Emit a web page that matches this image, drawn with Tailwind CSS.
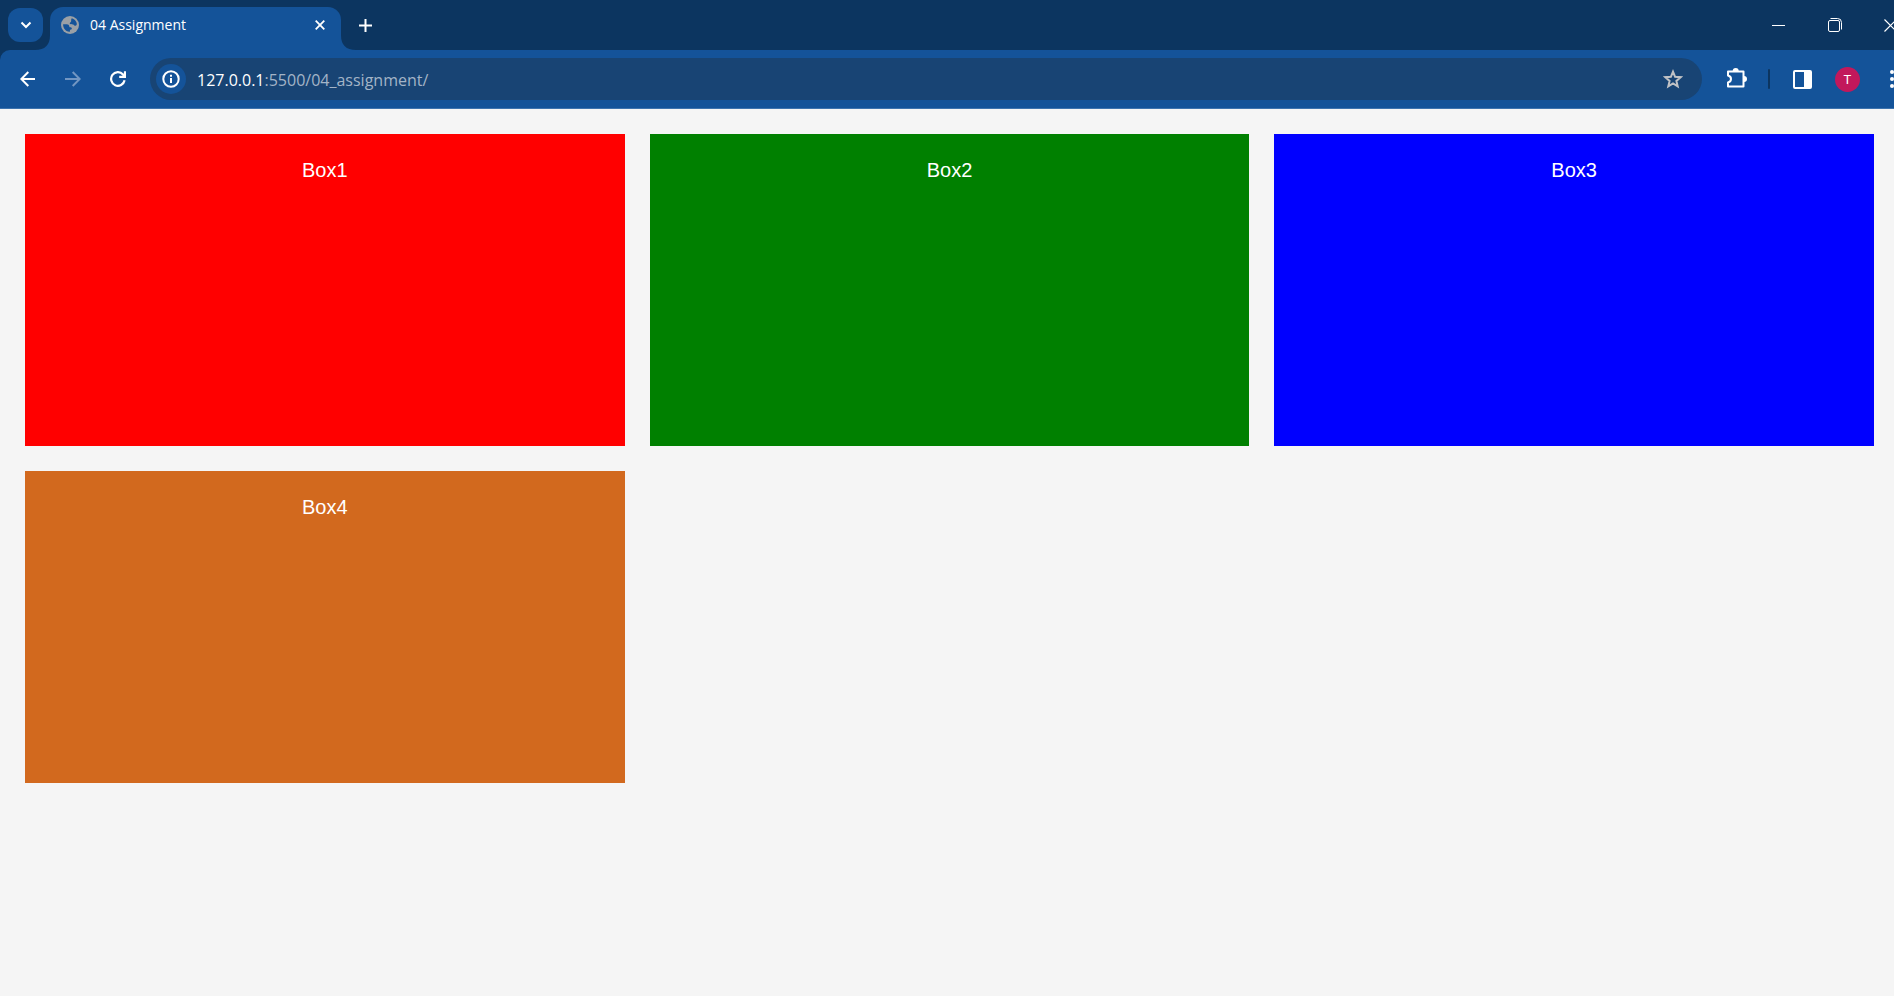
<!DOCTYPE html>
<html lang="en">
<head>
<meta charset="utf-8">
<title>04 Assignment</title>
<script src="https://cdn.jsdelivr.net/npm/@tailwindcss/browser@4"></script>
</head>
<body class="min-h-screen overflow-x-hidden bg-[#f5f5f5] font-['Segoe_UI','Open_Sans',sans-serif]">
<header class="overflow-hidden bg-[#0c3560] text-white">
  <div class="flex h-[50px] items-end">
    <button type="button" aria-label="Search tabs" class="mb-2 ml-2 flex h-[34px] w-[35px] shrink-0 items-center justify-center rounded-xl bg-[#145399]">
      <svg class="h-2 w-3" viewBox="0 0 12 8" fill="none" stroke="currentColor" stroke-width="2"><path d="M1.500 1.500L6 6l4.500-4.500"/></svg>
    </button>
    <svg class="-ml-2 h-[15px] w-[15px] shrink-0 text-[#145399]" viewBox="0 0 15 15" fill="currentColor"><path d="M15 0v15H0Q15 15 15 0Z"/></svg>
    <div role="tab" aria-selected="true" class="flex h-[43px] w-[291px] shrink-0 items-center rounded-t-[13px] bg-[#145399] pr-[11px] pb-[7px] pl-[11px]">
      <svg class="h-[18px] w-[18px] shrink-0" viewBox="0 0 18 18"><circle cx="9" cy="9" r="9" fill="#9aa0a6"/><path d="M10.800 2.200c2.400.6 4.300 2.500 4.900 4.900.4 2-.3 2.700-1.300 2.700-1.200 0-1.300-1-2.400-1.300-1.300-.3-3 .3-3.300-.9-.1-1 1.200-1.200 1.400-2.100.2-1.100-.2-2.400.7-3.300ZM2.100 8.300h3.700c1.500 0 2.300.8 2.500 2.100.1.700.6.900 1.300.9.900.1 1.300.7 1.200 1.400-.2.700-1 .7-1.500 1.100-.5.500-.3 1.400-.7 2.100C5 15.600 2 12.500 2.100 8.300Z" fill="#145399"/></svg>
      <span class="ml-[11px] flex-1 text-sm leading-5">04 Assignment</span>
      <button type="button" aria-label="Close tab" class="flex h-5 w-5 items-center justify-center">
        <svg class="h-[10px] w-[10px]" viewBox="0 0 10 10" stroke="currentColor" stroke-width="1.800"><path d="M.7.7l8.600 8.600M9.300.7L.7 9.300"/></svg>
      </button>
    </div>
    <svg class="h-[15px] w-[15px] shrink-0 text-[#145399]" viewBox="0 0 15 15" fill="currentColor"><path d="M0 0v15h15Q0 15 0 0Z"/></svg>
    <button type="button" aria-label="New tab" class="mb-[15px] flex h-5 w-[19px] shrink-0 items-center justify-center">
      <svg class="h-[13px] w-[13px]" viewBox="0 0 13 13" stroke="currentColor" stroke-width="2"><path d="M6.500 0v13M0 6.500h13"/></svg>
    </button>
    <div class="-mr-1 ml-auto flex h-[50px] shrink-0 items-center gap-[42px]">
      <button type="button" aria-label="Minimize" class="flex h-8 w-[14px] items-center">
        <svg class="h-[13px] w-[13px]" viewBox="0 0 13 13" stroke="currentColor"><path d="M0 6.500h13"/></svg>
      </button>
      <button type="button" aria-label="Restore" class="flex h-8 w-[14px] items-center">
        <svg class="h-[14px] w-[14px]" viewBox="0 0 14 14" fill="none" stroke="currentColor"><rect x=".5" y="2.500" width="11" height="11" rx="1.500"/><path d="M2.500.5h7q4 0 4 4v7"/></svg>
      </button>
      <button type="button" aria-label="Close window" class="flex h-8 w-[14px] items-center">
        <svg class="h-[13px] w-[13px]" viewBox="0 0 13 13" stroke="currentColor" stroke-width="1.200"><path d="M.5.5l12 12M12.500.5l-12 12"/></svg>
      </button>
    </div>
  </div>
  <div class="flex h-[59px] items-center rounded-tl-[10px] border-b border-[#3d73ae] bg-[#145399]">
    <nav class="ml-5 flex shrink-0 items-center gap-[29px]">
      <button type="button" aria-label="Back" class="h-4 w-4">
        <svg class="h-4 w-4" viewBox="0 0 16 16" fill="none" stroke="currentColor" stroke-width="2"><path d="M15 8H2M8.300 1L1.300 8l7 7"/></svg>
      </button>
      <button type="button" aria-label="Forward" class="h-4 w-4 text-[#7296c2]">
        <svg class="h-4 w-4" viewBox="0 0 16 16" fill="none" stroke="currentColor" stroke-width="2"><path d="M0 8H14M7.700 1l7 7-7 7"/></svg>
      </button>
      <button type="button" aria-label="Reload" class="h-4 w-4">
        <svg class="h-4 w-4" viewBox="0 0 16 16" fill="none" stroke="currentColor" stroke-width="2.200"><path d="M14.600 9.300A6.800 6.800 0 1 1 13 3.400l1.300 1.400M15 .3v5.600H9.200"/></svg>
      </button>
    </nav>
    <div class="ml-6 flex h-[42px] min-w-0 flex-1 items-center rounded-full bg-[#184474] pr-[19px] pl-[6px]">
      <button type="button" aria-label="View site information" class="flex h-[30px] w-[30px] shrink-0 items-center justify-center rounded-full bg-[#145399]">
        <svg class="h-[18px] w-[18px]" viewBox="0 0 18 18" fill="none" stroke="currentColor" stroke-width="2"><circle cx="9" cy="9" r="7.700"/><path d="M9 8v5M9 4.800v2"/></svg>
      </button>
      <div role="textbox" contenteditable="true" spellcheck="false" aria-label="Address" class="ml-[11px] min-w-0 flex-1 pt-[2px] text-base leading-6 whitespace-nowrap text-[#a3b4c7]"><span class="text-white">127.0.0.1</span>:5500/04_assignment/</div>
      <button type="button" aria-label="Bookmark this tab" class="h-5 w-5 shrink-0 text-[#c0c2c5]">
        <svg class="h-5 w-5" viewBox="0 0 20 20" fill="none" stroke="currentColor" stroke-width="2"><path d="M10 2.700l2.100 5.100 5.600.4-4.300 3.700 1.300 5.500-4.700-3-4.700 3 1.300-5.500-4.300-3.700 5.600-.4Z"/></svg>
      </button>
    </div>
    <div class="flex shrink-0 items-center">
      <button type="button" aria-label="Extensions" class="ml-6 h-[22px] w-[22px]">
        <svg class="h-[22px] w-[22px]" viewBox="0 0 22 22"><path d="M2 3.500h15.500v15H2v-4c2-.5 3-2 3-3.500S4 8 2 7.500Z" fill="none" stroke="currentColor" stroke-width="2" stroke-linejoin="round"/><path d="M6.700 3a3 3 0 0 1 6 0ZM18 8a3 3 0 0 1 0 6Z" fill="currentColor"/></svg>
      </button>
      <span class="ml-5 h-5 w-[2px] rounded-full bg-[#0c3560]"></span>
      <button type="button" aria-label="Side panel" class="ml-[23px] h-[19px] w-[19px]">
        <svg class="h-[19px] w-[19px]" viewBox="0 0 19 19"><rect x="1" y="1" width="17" height="17" rx="1" fill="none" stroke="currentColor" stroke-width="2"/><path d="M11 1h7v17h-7Z" fill="currentColor"/></svg>
      </button>
      <button type="button" aria-label="Profile" class="ml-[23px] flex h-[25px] w-[25px] items-center justify-center rounded-full bg-[#c2185b] font-[Roboto,sans-serif] text-[13px] leading-none">T</button>
      <button type="button" aria-label="Browser menu" class="ml-[30px] h-[18px] w-1">
        <svg class="h-[18px] w-1" viewBox="0 0 4 18" fill="currentColor"><circle cx="2" cy="2" r="2"/><circle cx="2" cy="9" r="2"/><circle cx="2" cy="16" r="2"/></svg>
      </button>
    </div>
  </div>
</header>
<main class="grid grid-cols-3 gap-[25px] pt-[25px] pr-5 pb-[25px] pl-[25px] text-center font-['Liberation_Sans',Arial,sans-serif] text-xl leading-6 text-white">
  <div class="h-[312px] bg-[#ff0000] pt-6">Box1</div>
  <div class="h-[312px] bg-[#008000] pt-6">Box2</div>
  <div class="h-[312px] bg-[#0000ff] pt-6">Box3</div>
  <div class="h-[312px] bg-[#d2691e] pt-6">Box4</div>
</main>
</body>
</html>
